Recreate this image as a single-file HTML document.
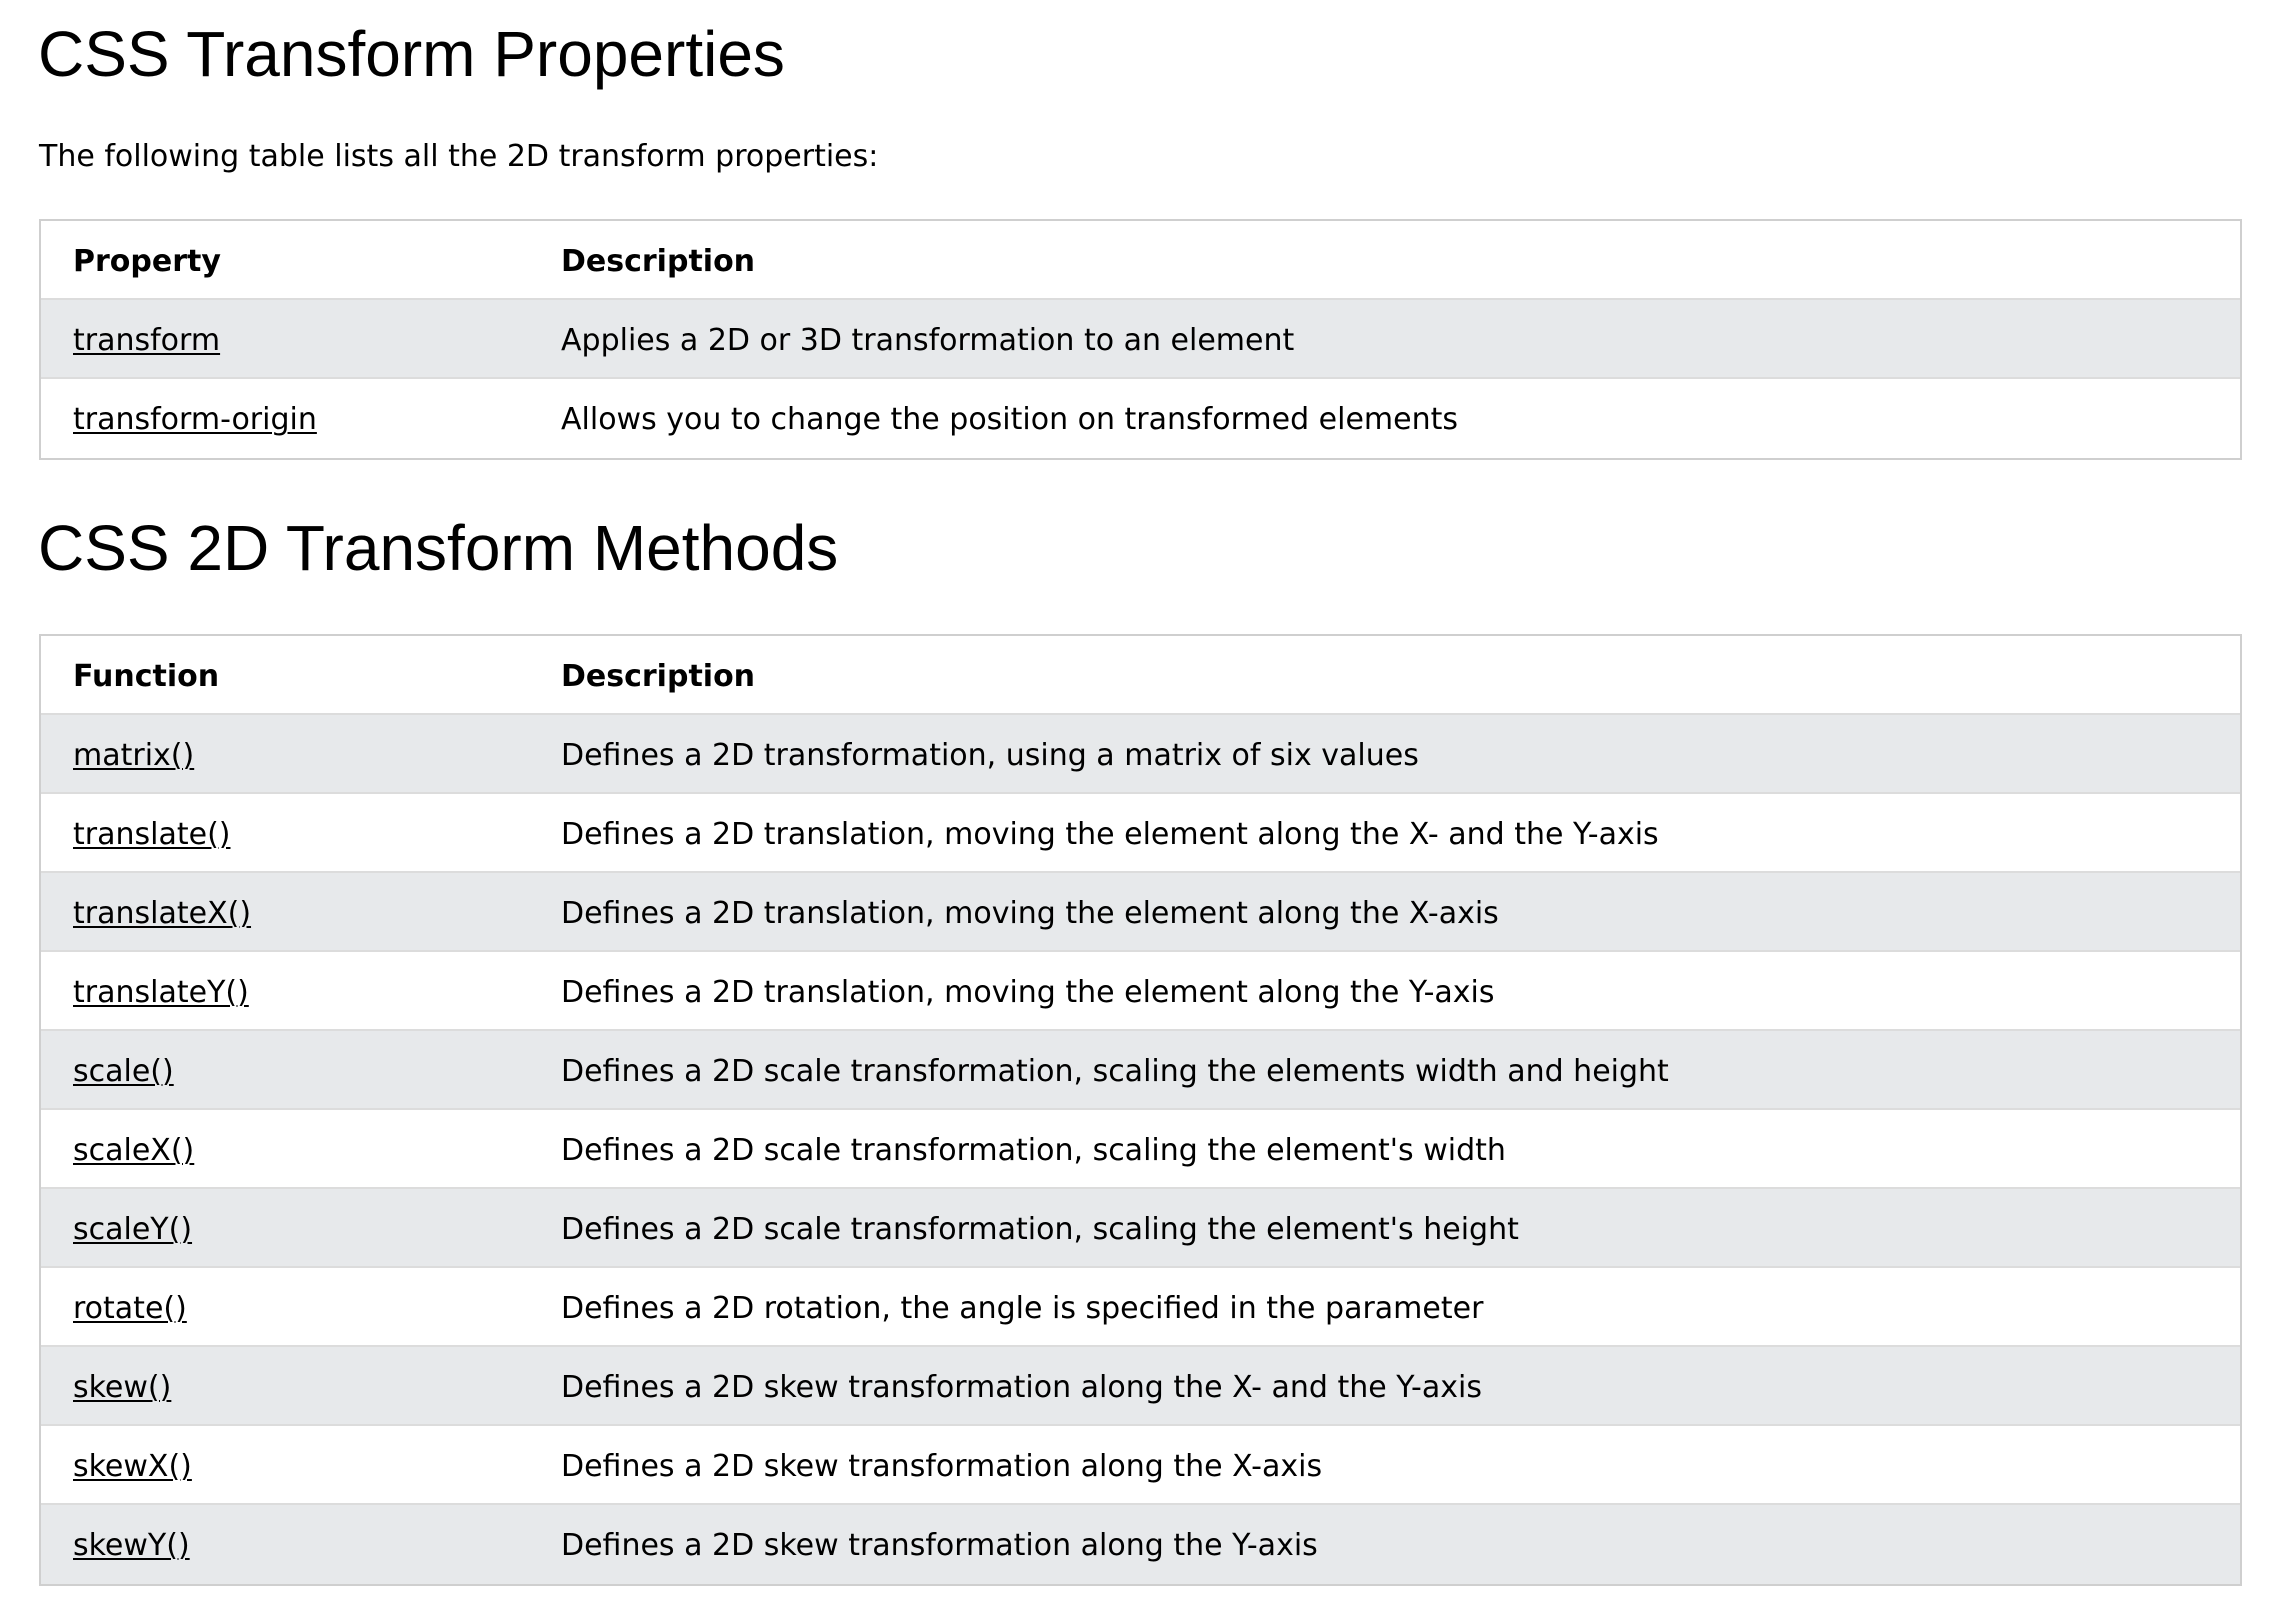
<!DOCTYPE html>
<html><head><meta charset="utf-8"><style>
html,body{margin:0;padding:0;background:#fff;width:2276px;height:1598px;overflow:hidden;}
body{position:relative;font-family:"DejaVu Sans","Liberation Sans",sans-serif;color:#000;}
h1{position:absolute;left:38px;margin:0;font-family:"Liberation Sans",sans-serif;font-weight:normal;font-size:64px;line-height:normal;white-space:nowrap;}
p{position:absolute;left:39px;top:139px;margin:0;font-size:30px;line-height:normal;white-space:nowrap;}
.t{position:absolute;left:39px;width:2203px;border:2px solid #cfcfcf;box-sizing:border-box;font-size:30px;}
.r{height:79px;box-sizing:border-box;border-bottom:2px solid #dcdcdc;display:flex;padding-top:23px;line-height:normal;white-space:nowrap;}
.r:last-child{border-bottom:none;}
.r.g{background:#e7e9eb;}
.c1{width:488px;padding-left:32px;flex:none;}
.h{font-weight:bold;}
a{color:#000;text-decoration:underline;text-decoration-thickness:2px;text-underline-offset:3px;}
</style></head><body>
<h1 style="top:17px">CSS Transform Properties</h1>
<p>The following table lists all the 2D transform properties:</p>
<div class="t" style="top:219px">
<div class="r h"><div class="c1">Property</div><div class="c2">Description</div></div>
<div class="r g"><div class="c1"><a>transform</a></div><div class="c2">Applies a 2D or 3D transformation to an element</div></div>
<div class="r"><div class="c1"><a>transform-origin</a></div><div class="c2">Allows you to change the position on transformed elements</div></div>
</div>
<h1 style="top:511px">CSS 2D Transform Methods</h1>
<div class="t" style="top:634px">
<div class="r h"><div class="c1">Function</div><div class="c2">Description</div></div>
<div class="r g"><div class="c1"><a>matrix()</a></div><div class="c2">Defines a 2D transformation, using a matrix of six values</div></div>
<div class="r"><div class="c1"><a>translate()</a></div><div class="c2">Defines a 2D translation, moving the element along the X- and the Y-axis</div></div>
<div class="r g"><div class="c1"><a>translateX()</a></div><div class="c2">Defines a 2D translation, moving the element along the X-axis</div></div>
<div class="r"><div class="c1"><a>translateY()</a></div><div class="c2">Defines a 2D translation, moving the element along the Y-axis</div></div>
<div class="r g"><div class="c1"><a>scale()</a></div><div class="c2">Defines a 2D scale transformation, scaling the elements width and height</div></div>
<div class="r"><div class="c1"><a>scaleX()</a></div><div class="c2">Defines a 2D scale transformation, scaling the element's width</div></div>
<div class="r g"><div class="c1"><a>scaleY()</a></div><div class="c2">Defines a 2D scale transformation, scaling the element's height</div></div>
<div class="r"><div class="c1"><a>rotate()</a></div><div class="c2">Defines a 2D rotation, the angle is specified in the parameter</div></div>
<div class="r g"><div class="c1"><a>skew()</a></div><div class="c2">Defines a 2D skew transformation along the X- and the Y-axis</div></div>
<div class="r"><div class="c1"><a>skewX()</a></div><div class="c2">Defines a 2D skew transformation along the X-axis</div></div>
<div class="r g"><div class="c1"><a>skewY()</a></div><div class="c2">Defines a 2D skew transformation along the Y-axis</div></div>
</div>
</body></html>
